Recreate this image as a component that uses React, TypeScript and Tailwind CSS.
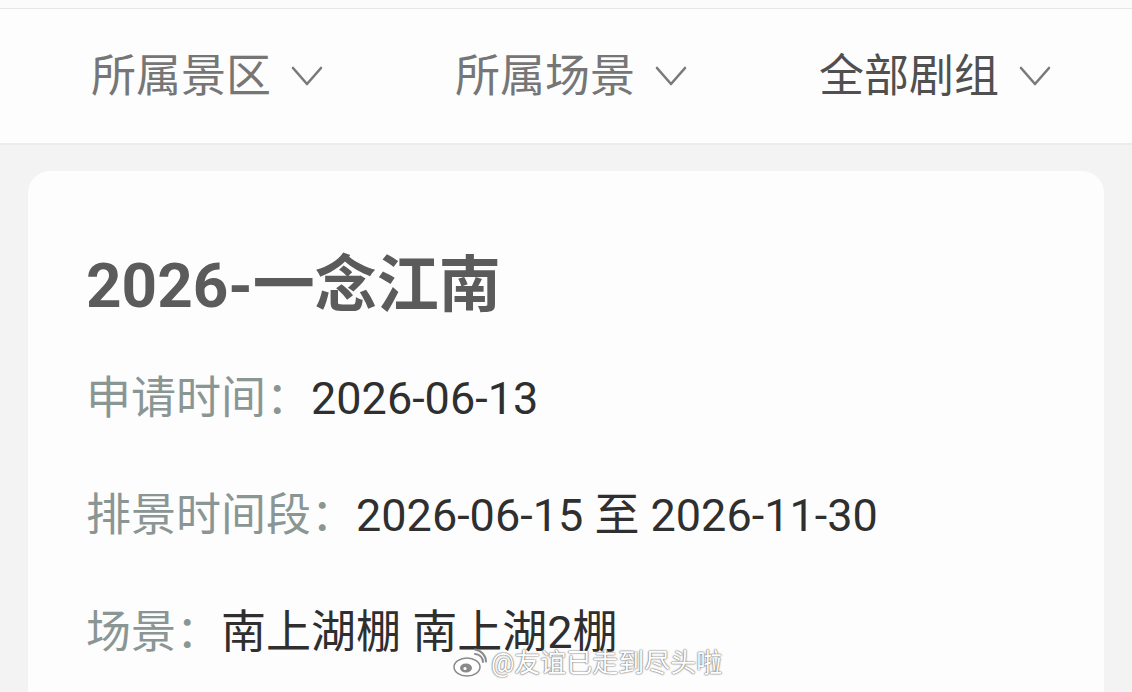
import React from "react";

const font = { fontFamily: 'Roboto, "Noto Sans CJK SC", sans-serif' };

const Chevron = () => (
  <svg width="32" height="22" viewBox="0 0 32 22" fill="none" className="ml-5">
    <path d="M2 3 L16 19 L30 3" stroke="#7a7a7a" strokeWidth="2.6" strokeLinecap="round" strokeLinejoin="round" />
  </svg>
);

const Filter = ({ label, dark = false }: { label: string; dark?: boolean }) => (
  <div className="flex items-center">
    <span className={`text-[45px] leading-none ${dark ? "text-[#505050]" : "text-[#767676]"}`}>{label}</span>
    <Chevron />
  </div>
);

const Row = ({ label, value }: { label: string; value: string }) => (
  <div className="flex h-[117px] items-center text-[45px] leading-none">
    <span className="text-[#8a9694]">{label}</span>
    <span className="text-[#2f2f2f]">{value}</span>
  </div>
);

const WeiboLogo = () => (
  <svg width="34" height="30" viewBox="0 0 34 30" fill="none">
    <ellipse cx="14" cy="19" rx="13" ry="9" fill="#fff" stroke="#8a8a8a" strokeWidth="1.5" />
    <ellipse cx="13" cy="20" rx="6" ry="4.5" fill="#8a8a8a" />
    <circle cx="12" cy="20.5" r="1.6" fill="#fff" />
    <path d="M22 6 a8 8 0 0 1 8 8" stroke="#8a8a8a" strokeWidth="2" strokeLinecap="round" />
    <path d="M22 1.5 a12.5 12.5 0 0 1 11 12" stroke="#8a8a8a" strokeWidth="2" strokeLinecap="round" />
  </svg>
);

export default function App() {
  return (
    <div className="relative h-[692px] w-[1132px] overflow-hidden bg-[#f3f3f3]" style={font}>
      <div className="h-[9px] border-b border-[#e6e6e6] bg-[#fbfbfb]" />
      <div className="flex h-[136px] items-center gap-[132px] border-b-2 border-[#ececec] bg-[#fdfdfd] pl-[91px]">
        <Filter label="所属景区" />
        <Filter label="所属场景" />
        <Filter label="全部剧组" dark />
      </div>
      <div className="px-[28px] pt-[26px]">
        <div className="rounded-[22px] bg-[#fdfdfd] px-[58px] pt-[84px] pb-10">
          <h1 className="mb-[23px] text-[62px] font-bold leading-none text-[#5b5b5b]">2026-一念江南</h1>
          <Row label="申请时间：" value="2026-06-13" />
          <Row label="排景时间段：" value="2026-06-15 至 2026-11-30" />
          <Row label="场景：" value="南上湖棚 南上湖2棚" />
        </div>
      </div>
      <div className="absolute left-[453px] top-[648px] flex items-center gap-1">
        <WeiboLogo />
        <span className="text-[26px] leading-none text-white [text-shadow:0_0_2px_#666,0_0_1px_#555]">@友谊已走到尽头啦</span>
      </div>
    </div>
  );
}
